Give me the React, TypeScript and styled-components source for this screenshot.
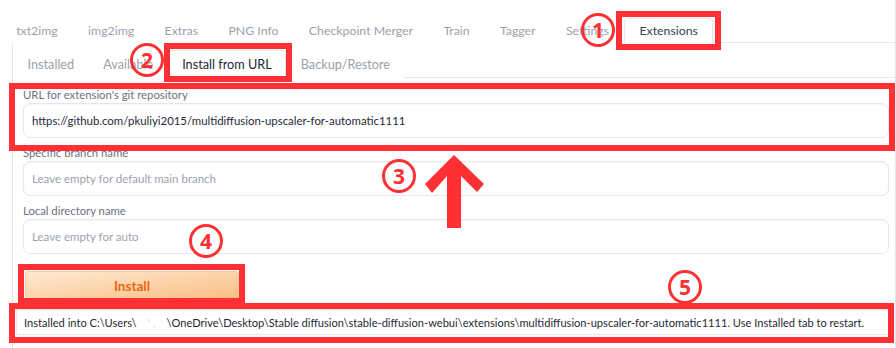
import styled, { createGlobalStyle } from "styled-components";

const RED = "#ff3034";

const GlobalStyle = createGlobalStyle`
  html, body {
    margin: 0;
    padding: 0;
    background: #ffffff;
  }
  body {
    font-family: "Lato", "Noto Sans", sans-serif;
    color: #1f2937;
  }
`;

const Page = styled.div`
  position: relative;
  width: 895px;
  height: 348px;
  border-right: 1px solid #e5e7eb;
  overflow: hidden;
`;

// top navigation tabs
const TopTabBar = styled.div`
  display: flex;
  padding-top: 18px;
  padding-left: 1px;
  border-bottom: 1px solid #e5e7eb;
`;

const TopTab = styled.div<{ $active?: boolean }>`
  height: 24px;
  line-height: 24px;
  padding: 0 14.2px;
  font-size: 12.3px;
  color: ${(p) => (p.$active ? "#374151" : "#9aa1ab")};
  background: #fff;
  border: 1px solid ${(p) => (p.$active ? "#e5e7eb" : "transparent")};
  border-bottom: none;
  border-radius: 4px 4px 0 0;
  margin-bottom: -1px;
`;

const Panel = styled.div`
  margin-left: 12px;
  border-left: 1px solid #e5e7eb;
  height: 305px;
`;

const SubTabBar = styled.div`
  display: flex;
  padding-top: 7px;
  border-bottom: 1px solid #e5e7eb;
`;

const SubTab = styled.div<{ $active?: boolean }>`
  height: 27px;
  line-height: 27px;
  padding: 0 13.5px;
  font-size: 12.7px;
  color: ${(p) => (p.$active ? "#1f2937" : "#9aa1ab")};
  background: #fff;
  border: 1px solid ${(p) => (p.$active ? "#e5e7eb" : "transparent")};
  border-bottom: none;
  margin-bottom: -1px;
`;

const Form = styled.div`
  display: flex;
  flex-direction: column;
  padding: 9px 6px 0 10px;
`;

const Field = styled.label`
  display: flex;
  flex-direction: column;
  margin-bottom: 7px;
`;

const FieldLabel = styled.span`
  font-size: 11.3px;
  line-height: 16px;
  color: #6b7280;
`;

const TextInput = styled.input`
  box-sizing: border-box;
  height: 35px;
  padding: 0 8px;
  border: 1px solid #e5e7eb;
  border-radius: 7px;
  background: #fff;
  box-shadow: inset 0 1px 2px rgba(0, 0, 0, 0.04);
  font-family: inherit;
  font-size: 11.4px;
  color: #1f2937;
  outline: none;

  &::placeholder {
    font-size: 11.5px;
    color: #9ca3af;
  }
`;

const InstallButton = styled.button`
  box-sizing: border-box;
  width: 214px;
  height: 29px;
  margin: 10px 0 0 2px;
  padding: 0;
  border: 1px solid #fcc99c;
  border-radius: 3px;
  background: linear-gradient(to bottom right, #feead3, #fbbd82);
  font-family: inherit;
  font-size: 13.5px;
  font-weight: 700;
  color: #e8670f;
`;

const Output = styled.div`
  box-sizing: border-box;
  height: 26px;
  margin: 9px 0 0 -7px;
  padding: 0 7px;
  line-height: 25px;
  border: 1px solid #e5e7eb;
  font-size: 11.1px;
  color: #1f2937;
  white-space: nowrap;
`;

const Redacted = styled.span`
  display: inline-block;
  width: 30px;
  color: #d1d5db;
  text-align: center;
`;

// red annotations drawn over the screenshot
const Highlight = styled.div<{ $x: number; $y: number; $w: number; $h: number }>`
  position: absolute;
  left: ${(p) => p.$x}px;
  top: ${(p) => p.$y}px;
  width: ${(p) => p.$w}px;
  height: ${(p) => p.$h}px;
  box-sizing: border-box;
  border: 6px solid ${RED};
  pointer-events: none;
`;

const Marker = styled.div<{ $x: number; $y: number }>`
  position: absolute;
  left: ${(p) => p.$x - 17}px;
  top: ${(p) => p.$y - 17}px;
  width: 34px;
  height: 34px;
  box-sizing: border-box;
  border: 3px solid ${RED};
  border-radius: 50%;
  display: flex;
  justify-content: center;
  align-items: center;
  font-family: "Noto Sans", sans-serif;
  font-size: 21px;
  font-weight: 700;
  color: ${RED};
`;

const ArrowSvg = styled.svg`
  position: absolute;
  left: 420px;
  top: 150px;
`;

const topTabs = [
  "txt2img",
  "img2img",
  "Extras",
  "PNG Info",
  "Checkpoint Merger",
  "Train",
  "Tagger",
  "Settings",
  "Extensions",
];

const subTabs = ["Installed", "Available", "Install from URL", "Backup/Restore"];

export default function App() {
  return (
    <Page>
      <GlobalStyle />
      <TopTabBar>
        {topTabs.map((t) => (
          <TopTab key={t} $active={t === "Extensions"}>
            {t}
          </TopTab>
        ))}
      </TopTabBar>
      <Panel>
        <SubTabBar>
          {subTabs.map((t) => (
            <SubTab key={t} $active={t === "Install from URL"}>
              {t}
            </SubTab>
          ))}
        </SubTabBar>
        <Form>
          <Field>
            <FieldLabel>URL for extension's git repository</FieldLabel>
            <TextInput
              readOnly
              defaultValue="https://github.com/pkuliyi2015/multidiffusion-upscaler-for-automatic1111"
            />
          </Field>
          <Field>
            <FieldLabel>Specific branch name</FieldLabel>
            <TextInput readOnly placeholder="Leave empty for default main branch" />
          </Field>
          <Field>
            <FieldLabel>Local directory name</FieldLabel>
            <TextInput readOnly placeholder="Leave empty for auto" />
          </Field>
          <InstallButton>Install</InstallButton>
          <Output>
            Installed into C:\Users\<Redacted>' ,</Redacted>\OneDrive\Desktop\Stable
            diffusion\stable-diffusion-webui\extensions\multidiffusion-upscaler-for-automatic1111.
            Use Installed tab to restart.
          </Output>
        </Form>
      </Panel>

      <Highlight $x={616} $y={11} $w={105} $h={39} />
      <Highlight $x={164} $y={43} $w={128} $h={39} />
      <Highlight $x={9} $y={83} $w={886} $h={68} />
      <Highlight $x={18} $y={264} $w={227} $h={40} />
      <Highlight $x={9} $y={303} $w={885} $h={40} />

      <Marker $x={598} $y={30}>1</Marker>
      <Marker $x={147} $y={60}>2</Marker>
      <Marker $x={399} $y={176}>3</Marker>
      <Marker $x={206} $y={241}>4</Marker>
      <Marker $x={685} $y={287}>5</Marker>

      <ArrowSvg width="70" height="85" viewBox="420 150 70 85">
        <polygon
          fill={RED}
          points="454,155 484,184 477,192 461,176 461,228 447,228 447,176 432,193 425,184"
        />
      </ArrowSvg>
    </Page>
  );
}
